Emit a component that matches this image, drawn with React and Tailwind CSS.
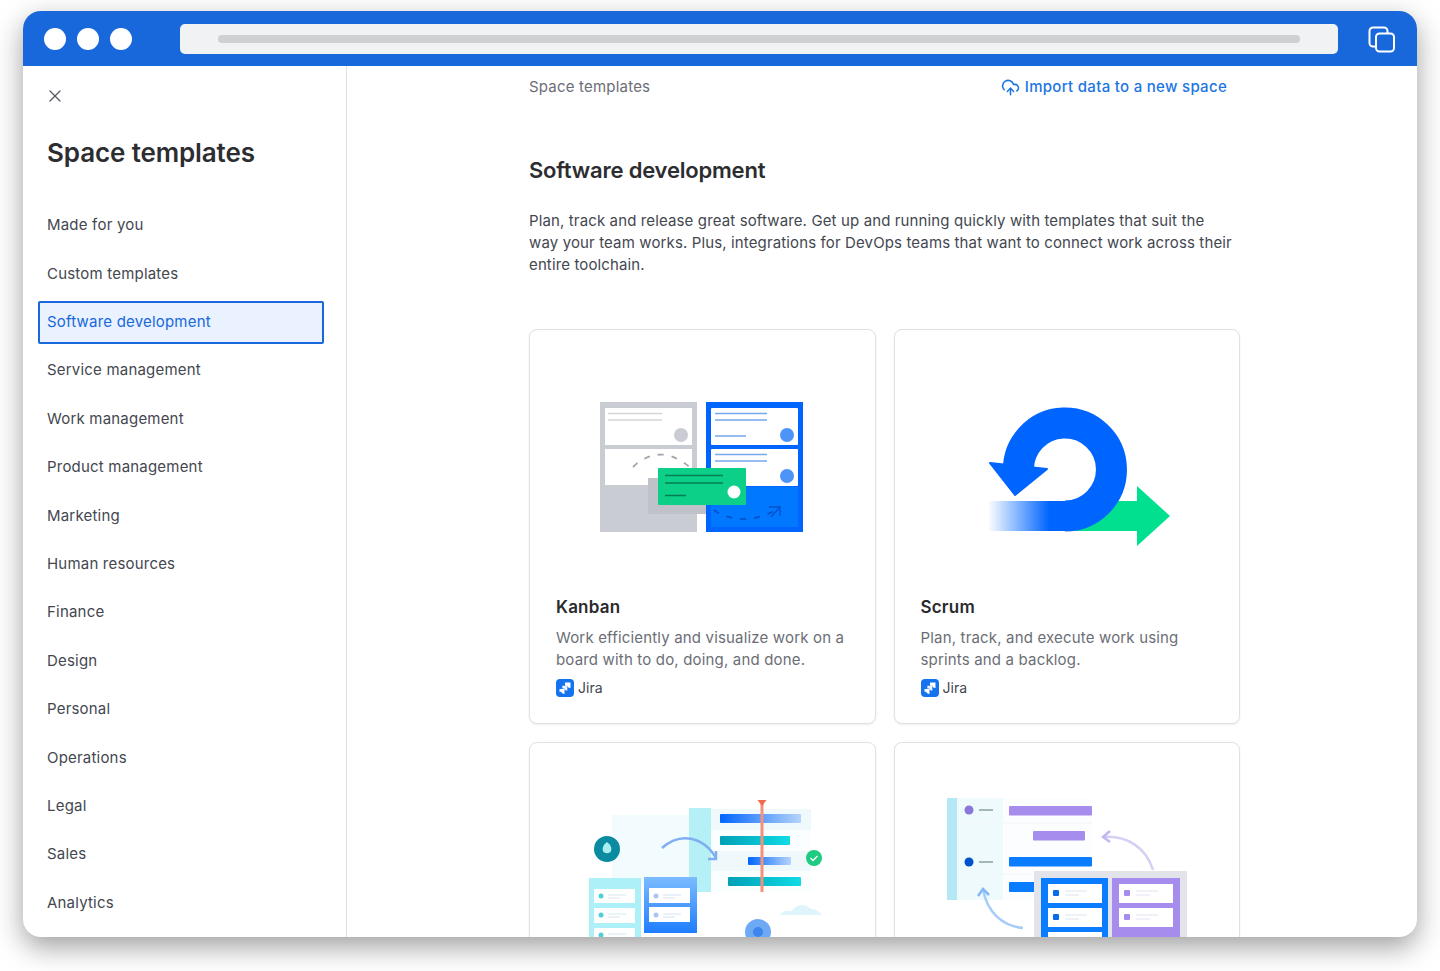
import React from "react";
import { X, CloudUpload } from "lucide-react";

const navItems = [
  "Made for you",
  "Custom templates",
  "Software development",
  "Service management",
  "Work management",
  "Product management",
  "Marketing",
  "Human resources",
  "Finance",
  "Design",
  "Personal",
  "Operations",
  "Legal",
  "Sales",
  "Analytics",
];

const KanbanArt = () => (
  <svg viewBox="530 330 345 262" className="w-[345px] h-[262px] block blur-[0.4px]">
    <rect x="600" y="402" width="97" height="130" fill="#c9ccd2" />
    <rect x="605" y="408" width="87" height="37" fill="#fff" />
    <rect x="605" y="449" width="87" height="36" fill="#fff" />
    <path d="M608 413.5h54M608 420h54" stroke="#d3d5d9" strokeWidth="1.4" />
    <circle cx="681" cy="435" r="7" fill="#c9ccd2" />
    <path d="M633 467 C642 458 655 453 666 455 C673 456 681 460 691 468" fill="none" stroke="#a3a6ad" strokeWidth="1.8" strokeDasharray="6 8" />
    <rect x="648" y="478" width="58" height="36" fill="#bfc2c9" />
    <rect x="706" y="402" width="97" height="130" fill="#0065ff" />
    <rect x="711" y="408" width="87" height="37" rx="1" fill="#fff" />
    <rect x="711" y="449" width="87" height="37" rx="1" fill="#fff" />
    <rect x="711" y="487" width="87" height="40" fill="#0078ff" />
    <path d="M715 413.5h52M715 420h52M715 436h31M715 454.500h52M715 461h52" stroke="#74a9ee" strokeWidth="1.5" />
    <circle cx="787" cy="435" r="7" fill="#4c94f8" />
    <circle cx="787" cy="476" r="7" fill="#4c94f8" />
    <path d="M714 510 C730 522 755 522 776 510" fill="none" stroke="#0052cc" strokeWidth="1.8" strokeDasharray="6 8" />
    <path d="M769 507h11v9M780 507l-9 10" fill="none" stroke="#0052cc" strokeWidth="1.4" />
    <rect x="658" y="468" width="88" height="37" rx="1" fill="#0ccf88" />
    <path d="M665 475.500h58M665 483h58M665 495.500h21" stroke="#057e55" strokeWidth="1.5" />
    <circle cx="734" cy="492" r="6.500" fill="#fff" />
  </svg>
);

const ScrumArt = () => (
  <svg viewBox="895 330 345 262" className="w-[345px] h-[262px] block blur-[0.4px]">
    <defs>
      <linearGradient id="scrumFade" x1="988" x2="1060" y1="0" y2="0" gradientUnits="userSpaceOnUse">
        <stop offset="0" stopColor="#0065ff" stopOpacity="0" />
        <stop offset="0.85" stopColor="#0065ff" />
      </linearGradient>
    </defs>
    <path d="M1075 501h62v-15l33 30-33 30v-15h-62z" fill="#00e08f" strokeLinejoin="round" />
    <rect x="988" y="501" width="78" height="30" fill="url(#scrumFade)" />
    <path d="M1018.500 472A46.500 46.500 0 1 1 1065 516" fill="none" stroke="#0065ff" strokeWidth="31" />
    <path d="M990 463l57 6-32 26z" fill="#0065ff" stroke="#0065ff" strokeWidth="2" strokeLinejoin="round" />
  </svg>
);

const RoadmapArt = () => (
  <svg viewBox="530 743 345 262" className="w-[345px] h-[262px] block blur-[0.6px]">
    <defs>
      <linearGradient id="barBlue" x1="0" x2="1" y1="0" y2="0">
        <stop offset="0" stopColor="#0065ff" />
        <stop offset="1" stopColor="#b6d4fb" />
      </linearGradient>
      <linearGradient id="barTeal" x1="0" x2="1" y1="0" y2="0">
        <stop offset="0" stopColor="#00a0b5" />
        <stop offset="1" stopColor="#10dbe6" />
      </linearGradient>
      <linearGradient id="colBlue" x1="0" x2="0" y1="0" y2="1">
        <stop offset="0" stopColor="#7cbcff" />
        <stop offset="1" stopColor="#1f7dff" />
      </linearGradient>
    </defs>
    <rect x="612" y="815" width="78" height="70" fill="#f2fbfd" />
    <rect x="689" y="808" width="22" height="84" fill="#b4f0f6" />
    <rect x="711" y="809" width="100" height="83" fill="#eff9fc" />
    <rect x="711" y="830" width="100" height="21" fill="#fbfeff" />
    <rect x="711" y="871" width="100" height="21" fill="#fbfeff" />
    <rect x="720" y="814" width="81" height="9" rx="1" fill="url(#barBlue)" />
    <rect x="720" y="836" width="70" height="9" rx="1" fill="url(#barTeal)" />
    <rect x="748" y="857" width="43" height="8" rx="1" fill="url(#barBlue)" />
    <rect x="728" y="877" width="73" height="9" rx="1" fill="url(#barTeal)" />
    <path d="M762 802v90" stroke="#f4917c" strokeWidth="3" />
    <path d="M757.500 800h9l-4.500 6z" fill="#f26a4f" />
    <circle cx="814" cy="858" r="8" fill="#1ecb80" />
    <path d="M810.500 858l2.500 2.500 4.500-4.500" fill="none" stroke="#fff" strokeWidth="1.400" />
    <circle cx="607" cy="849" r="13" fill="#0b8b9f" />
    <path d="M607 842c4 3 5 6 4 9-1 3-7 3-8 0-1-3 0-6 4-9z" fill="#a9eef0" />
    <path d="M662 848C680 832 703 836 716 858" fill="none" stroke="#80aef2" strokeWidth="2.500" />
    <path d="M708 859l8 0 0-8" fill="none" stroke="#80aef2" strokeWidth="2.500" />
    <rect x="589" y="878" width="52" height="70" fill="#aef0f7" />
    <rect x="594" y="889" width="41" height="14" fill="#fff" />
    <rect x="594" y="908" width="41" height="15" fill="#fff" />
    <rect x="594" y="928" width="41" height="15" fill="#fff" />
    <circle cx="601" cy="896" r="2.500" fill="#4fd0d8" />
    <circle cx="601" cy="915" r="2.500" fill="#4fd0d8" />
    <circle cx="601" cy="935" r="2.500" fill="#4fd0d8" />
    <path d="M608 895h18M608 898h12M608 914h18M608 917h12M608 934h18" stroke="#d8e6ee" strokeWidth="1" />
    <rect x="644" y="877" width="53" height="56" fill="url(#colBlue)" />
    <rect x="649" y="888" width="41" height="15" fill="#fff" />
    <rect x="649" y="907" width="41" height="15" fill="#fff" />
    <circle cx="656" cy="896" r="2.500" fill="#a9c4f5" />
    <circle cx="656" cy="915" r="2.500" fill="#a9c4f5" />
    <path d="M663 895h18M663 898h12M663 914h18M663 917h12" stroke="#d5e2f4" strokeWidth="1" />
    <path d="M780 915c4-6 10-4 12-4 4-7 14-8 19-2 5 0 9 3 11 6z" fill="#dff5fb" />
    <circle cx="758" cy="932" r="13" fill="#6ea9f5" />
    <circle cx="758" cy="932" r="5" fill="#3d86ee" />
  </svg>
);

const TeamArt = () => (
  <svg viewBox="895 743 345 262" className="w-[345px] h-[262px] block blur-[0.6px]">
    <rect x="947" y="798" width="145" height="102" fill="#fbfdfe" />
    <rect x="957" y="798" width="46" height="102" fill="#effafd" />
    <rect x="947" y="798" width="10" height="102" fill="#b5e8f5" />
    <path d="M957 823h135M957 874h135" stroke="#f1f6f9" strokeWidth="1" />
    <circle cx="969" cy="810" r="4.500" fill="#8a77d9" />
    <circle cx="969" cy="862" r="4.500" fill="#0052cc" />
    <path d="M979 810h14M979 862h14" stroke="#a3b6ba" strokeWidth="2" />
    <rect x="1009" y="806" width="83" height="9.500" rx="1" fill="#a68cec" />
    <rect x="1033" y="831" width="52" height="9.500" rx="1" fill="#a68cec" />
    <rect x="1009" y="857" width="83" height="9.500" rx="1" fill="#0a7cff" />
    <rect x="1009" y="882" width="30" height="10" rx="1" fill="#0a7cff" />
    <path d="M1153 870C1146 847 1126 835 1103 837" fill="none" stroke="#d6cef3" strokeWidth="2.500" />
    <path d="M1110 831l-7 6 7 5" fill="none" stroke="#c3b7ef" strokeWidth="2.500" />
    <path d="M1023 928C1002 926 987 912 983 889" fill="none" stroke="#a8ccf8" strokeWidth="2.500" />
    <path d="M978 896l5-7 6 6" fill="none" stroke="#86b8f6" strokeWidth="2.500" />
    <rect x="1034" y="871" width="153" height="80" fill="#e3e3ea" />
    <rect x="1041" y="878" width="67" height="70" fill="#0a7cff" />
    <rect x="1112" y="878" width="68" height="70" fill="#a68cec" />
    {[884, 908, 932].map((y) => (
      <g key={y}>
        <rect x="1048" y={y} width="54" height="19" fill="#fff" />
        <rect x="1053" y={y + 6} width="6" height="6" rx="1" fill="#0a6de8" />
        <path d={`M1065 ${y + 7}h22M1065 ${y + 11}h14`} stroke="#dde3ec" strokeWidth="1" />
      </g>
    ))}
    {[884, 908].map((y) => (
      <g key={y}>
        <rect x="1119" y={y} width="54" height="19" fill="#fff" />
        <rect x="1124" y={y + 6} width="6" height="6" rx="1" fill="#a68cec" />
        <path d={`M1136 ${y + 7}h22M1136 ${y + 11}h14`} stroke="#e4e1f1" strokeWidth="1" />
      </g>
    ))}
  </svg>
);

const JiraMark = () => (
  <svg viewBox="0 0 18 18" className="w-[18px] h-[18px] shrink-0">
    <rect width="18" height="18" rx="4" fill="#1573f0" />
    <path d="M9 3.500h5.500V9c-1.800 0-3-.8-3.300-2.200H9z" fill="#fff" />
    <path d="M6.300 6.800h5v5c-1.800 0-3-.9-3.200-2.200H6.300z" fill="#fff" opacity="0.9" />
    <path d="M3.500 10h5v5c-1.800 0-3-.9-3.200-2.200H3.500z" fill="#fff" />
  </svg>
);

const TemplateCard = ({ art, title, desc }) => (
  <div className="h-[395px] rounded-lg border border-[#dfe1e6] bg-white shadow-[0_1px_2px_rgba(9,30,66,0.08)] overflow-hidden">
    {art}
    {title && (
      <div className="px-[26px]">
        <h3 className="text-[17px] leading-6 font-semibold text-[#292a2e] mt-[3px] tracking-[0.2px]">{title}</h3>
        <p className="text-[15px] leading-[22px] text-[#6b6e76] mt-[8px] tracking-[0.17px]">{desc}</p>
        <div className="flex items-center gap-1 mt-[7px] h-5 text-[14px] leading-[18px] text-[#44474f]">
          <JiraMark />
          <span className="-mt-px">Jira</span>
        </div>
      </div>
    )}
  </div>
);

export default function App() {
  return (
    <main className="h-[971px] overflow-hidden bg-white px-[23px] pt-[11px] font-[Inter,sans-serif]">
      <div className="h-[926px] rounded-[18px] overflow-hidden bg-white flex flex-col shadow-[0_10px_28px_rgba(0,0,0,0.38)]">
        <header className="h-[55px] shrink-0 bg-[#1868db] flex items-center pl-[21px] pr-[22px]">
          <div className="flex gap-[11px]">
            <span className="w-[22px] h-[22px] rounded-full bg-white" />
            <span className="w-[22px] h-[22px] rounded-full bg-white" />
            <span className="w-[22px] h-[22px] rounded-full bg-white" />
          </div>
          <div className="flex-1 h-[30px] ml-[48px] mr-[30px] rounded-[5px] bg-[#f1f2f4] flex items-center px-[38px]">
            <div className="w-full h-2 rounded-full bg-[#cfd0d2]" />
          </div>
          <svg viewBox="0 0 27 27" className="w-[27px] h-[27px] mt-[2px]" fill="none" stroke="#fff" strokeWidth="2">
            <path d="M7 20.500H5a3.500 3.500 0 0 1-3.500-3.500V5A3.500 3.500 0 0 1 5 1.500h11A3.500 3.500 0 0 1 19.500 5v2" />
            <rect x="8" y="7.500" width="18" height="18" rx="3.500" />
          </svg>
        </header>

        <div className="flex-1 flex min-h-0">
          <aside className="w-[324px] shrink-0 border-r border-[#dcdfe4] pl-[15px]">
            <button className="block ml-[7px] mt-[20px] text-[#55585f]">
              <X size={20} strokeWidth={1.5} />
            </button>
            <h1 className="ml-[9px] mt-[28px] h-[38px] text-[26px] leading-[38px] font-semibold text-[#2c2d31] tracking-[-0.12px]">
              Space templates
            </h1>
            <nav className="flex flex-col gap-[5.4px] mt-[32px] tracking-[0.2px]">
              {navItems.map((item) =>
                item === "Software development" ? (
                  <a key={item} className="w-[286px] h-[43px] flex items-center pl-[7px] text-[15px] text-[#1868db] bg-[#e9f2fe] border-2 border-[#1868db] rounded-[2px]">
                    {item}
                  </a>
                ) : (
                  <a key={item} className="w-[286px] h-[43px] flex items-center pl-[9px] text-[15px] text-[#44474f]">
                    {item}
                  </a>
                )
              )}
            </nav>
          </aside>

          <section className="flex-1 min-w-0 overflow-hidden pl-[182px]">
            <div className="w-[711px]">
              <div className="h-[42px] flex items-center justify-between pr-[13px] text-[15px] tracking-[0.2px]">
                <span className="text-[#6b6e76]">Space templates</span>
                <a className="flex items-center gap-[5px] font-medium text-[#1c76e2] tracking-[0.3px]">
                  <CloudUpload size={19} strokeWidth={2} />
                  Import data to a new space
                </a>
              </div>
              <h2 className="mt-[46px] h-8 text-[22px] leading-8 font-semibold text-[#2c2d31] tracking-[-0.2px]">
                Software development
              </h2>
              <p className="mt-[24px] w-[708px] text-[15px] leading-[22px] text-[#44474f] tracking-[0.13px]">
                Plan, track and release great software. Get up and running quickly with templates that suit the way your team works. Plus, integrations for DevOps teams that want to connect work across their entire toolchain.
              </p>
              <div className="grid grid-cols-2 gap-[18px] mt-[53px]">
                <TemplateCard
                  art={<KanbanArt />}
                  title="Kanban"
                  desc="Work efficiently and visualize work on a board with to do, doing, and done."
                />
                <TemplateCard
                  art={<ScrumArt />}
                  title="Scrum"
                  desc="Plan, track, and execute work using sprints and a backlog."
                />
                <TemplateCard art={<RoadmapArt />} />
                <TemplateCard art={<TeamArt />} />
              </div>
            </div>
          </section>
        </div>
      </div>
    </main>
  );
}
